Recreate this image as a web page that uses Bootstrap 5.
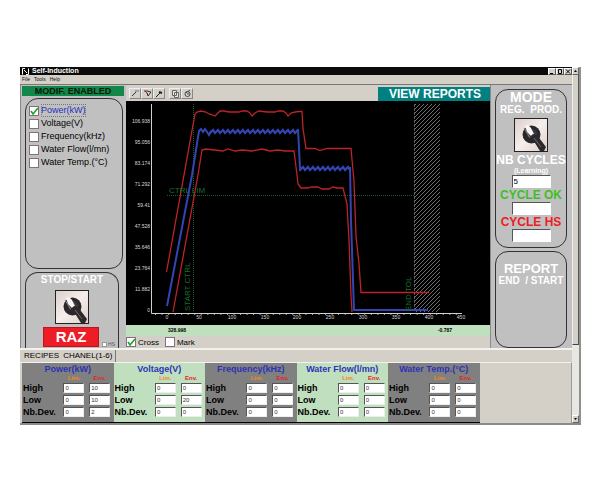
<!DOCTYPE html>
<html lang="en">
<head>
<meta charset="utf-8">
<meta name="viewport" content="width=device-width, initial-scale=1">
<title>Self-Induction</title>
<link href="https://cdn.jsdelivr.net/npm/bootstrap@5.3.0/dist/css/bootstrap.min.css" rel="stylesheet">
<style>
body{background:#fff;color:#000;font-family:"Liberation Sans",Arial,sans-serif;font-size:9px;line-height:13px;padding:67px 19px 0 20px}
button,input{font-family:inherit}
.app{background:#d4d0c8;border-bottom:2px solid #8a8a8a}
.titlebar{background:#0b0b0b;color:#fff;font-size:7px;font-weight:700;line-height:8px;padding-left:2px}
.titlebar svg{width:7px;height:7px;margin-right:3px}
.titlebar .winbtn{width:8px;height:7px;background:#d4d0c8;border:1px solid #fff;border-right-color:#555;border-bottom-color:#555;padding:0;display:flex}
.titlebar .winbtn svg{width:6px;height:5px;margin:0}
.menus{font-size:5px;line-height:9px;padding-left:2px;gap:4px;border-bottom:1px solid #777}
.menus a{color:#111;text-decoration:none}
.side{background:#c0c0c0}
.side-left{width:106px;border-left:1px solid #888;padding:1px 2px 0 1px}
.side-right{width:82px;padding:4px 5px 0 4px;border-left:1px solid #8a8a8a}
.modif{background:#128749;color:#021a0b;font-size:9px;font-weight:700;line-height:10px;text-align:center;margin-bottom:2px}
.box{border:1px solid #333;border-radius:13px}
.box-list{min-height:171px;margin:0 1px 3px 3px;padding:5px 3px}
.box-stop{margin:0 5px 0 3px;border-bottom:0;border-radius:13px 13px 0 0;flex:1;color:#fff;padding-top:1px}
.list-line,.check-line{display:flex;align-items:center;gap:2px}
.tick{appearance:none;width:10px;height:10px;background:#fff;border:1px solid #84707c;margin:0;flex:none}
.tick:checked{background:#fff url("data:image/svg+xml,%3Csvg xmlns='http://www.w3.org/2000/svg' viewBox='0 0 8 8'%3E%3Cpath d='M1 4l2 3 5-6' fill='none' stroke='%2318a52c' stroke-width='1.6'/%3E%3C/svg%3E") center/8px 8px}
.tick-s{width:5px;height:5px;border-color:#999}
.chosen{color:#2730bd;outline:1px dotted #777;outline-offset:-1px}
.knob{width:34px;height:34px;border:1px solid #222;padding:0;display:block;background:#efe4e0}
.knob svg{display:block;width:100%;height:100%}
.head-s{font-size:10px;line-height:12px;font-weight:700}
.raz{background:#ee1c25;color:#fff;font-size:15px;line-height:18px;font-weight:700;border:1px solid #b9151c;width:56px;padding:0;height:20px}
.razrow{padding-top:3px}
.hs{font-size:5px;line-height:6px;color:#555;gap:1px;padding:0 3px}
.tools{height:16px;padding-left:3px}
.tool{width:12px;height:11px;padding:0;border:1px solid #eee;border-right-color:#888;border-bottom-color:#888;background:#d4d0c8;display:flex;justify-content:center}
.tool svg{width:9px;height:9px}
.reports{background:#008080;color:#fff;font-weight:700;font-size:12px;line-height:14px;width:112px;border:0;padding:0 0 0 2px}
.plot{display:block;width:100%;background:#000}
.plot text{font-family:"Liberation Sans",Arial,sans-serif;font-size:5px;fill:#d8d8d8}
.plot .cap{font-size:8px;fill:#17702c}
.readout{background:#c0dfbf;font-size:5px;font-weight:700;line-height:11px;padding:0 38px 0 42px}
.checks{line-height:11px;font-size:8px;height:12px;gap:6px}
.white{color:#fff;font-weight:700}
.t14{font-size:14px;line-height:15px}
.t13{font-size:13px;line-height:15px}
.t12{font-size:12px;line-height:14px}
.t10{font-size:10px;line-height:10px}
.t6{font-size:7px;line-height:8px}
.count{width:39px;height:13px;border:1px solid #fff;border-top-color:#555;border-left-color:#555;background:#fff;font-size:8px;padding:0 1px;display:block;margin:0 auto}
.ok{color:#3fbf25;font-weight:700}.ko{color:#ee1c25;font-weight:700}
.box-mode{min-height:159px;margin-bottom:3px}
.box-mode .knob{margin-top:3px;margin-bottom:1px}
.box-report{flex:1;padding-top:9px}
.scroller{width:9px;background:#e9e7e2;border-right:2px solid #909090}
.scroller button{width:7px;height:8px;border:1px solid #fff;border-right-color:#666;border-bottom-color:#666;background:#d4d0c8;padding:0;display:flex}
.thumb{flex:0 1 270px;background:#d4d0c8;border-left:1px solid #eee;border-bottom:1px solid #444;border-right:1px solid #555}
.tabsrow{border-top:2px solid #f4f2ee;font-size:8px;line-height:12px;gap:4px;padding-left:4px}
.tabsrow button{border:0;background:none;padding:0;line-height:12px}
.tabsrow .on{border-right:1px solid #777;padding-right:3px}
.chans{padding-left:2px;border-top:1px solid #f4f2ee;border-right:1px solid #999}
.chan{background:#808080;border-bottom:1px solid #000;padding:1px 1px 4px}
.chan.pale{background:#c0dfbf}
.chan table{width:100%;table-layout:fixed;font-weight:700;line-height:12px}
.chan td,.chan th{padding:0;vertical-align:middle}
.chan thead th{text-align:center;color:#2d33b8;line-height:11px}
.chan thead .sub th{font-size:6px;line-height:7px}
.chan thead .sub .lim{color:#f08a1c}.chan thead .sub .env{color:#e3231f}
.chan col:first-child{width:38px}
.chan input{display:block;width:21px;height:10px;margin:1px auto;border:1px solid #eee;border-top-color:#555;border-left-color:#555;background:#fff;font-size:6px;line-height:7px;padding:0 1px;color:#333}
</style>
<script src="https://cdn.jsdelivr.net/npm/bootstrap@5.3.0/dist/js/bootstrap.bundle.min.js"></script>
</head>
<body>
<svg width="0" height="0" class="position-absolute" aria-hidden="true">
<defs>
<linearGradient id="plate" x1="0" x2="1" y2="1"><stop stop-color="#dccfcb"/><stop offset=".5" stop-color="#f6eeeb"/><stop offset="1" stop-color="#dfcfca"/></linearGradient>
<symbol id="dial" viewBox="0 0 32 32"><rect width="32" height="32" fill="url(#plate)"/><circle cx="16.500" cy="15.500" r="9" fill="#292729"/><circle cx="17" cy="15" r="5" fill="#3c393d"/><path d="M10 7l3-1 3 3 3 6-3 2-4-4z" fill="#f7f5f5"/><path d="M9 9l6 10" stroke="#888" stroke-width="1"/><path d="M14 19l4-4 4 1 9 12-2 4-4 0-5-8z" fill="#2c282b"/><path d="M19 19l7 9" stroke="#6c686c" stroke-width="1"/></symbol>
</defs></svg>
<main class="app d-flex">
<div class="flex-grow-1 overflow-hidden">
<header class="titlebar d-flex align-items-center">
<svg viewBox="0 0 7 7" fill="none" stroke="#fff"><path d="M3 .5H.5v6M4 6.500h2.500v-6M2 2l3 3"/></svg><span class="me-auto">Self-Induction</span>
<button class="winbtn" aria-label="Minimize"><svg viewBox="0 0 6 5"><path d="M1 4.500h3" stroke="#000"/></svg></button>
<button class="winbtn" aria-label="Restore"><svg viewBox="0 0 6 5"><path d="M1.500.5h3v4h-3z" fill="none" stroke="#000"/></svg></button>
<button class="winbtn" aria-label="Close"><svg viewBox="0 0 6 5"><path d="M1 .5l4 4M5 .5l-4 4" stroke="#000"/></svg></button>
</header>
<nav class="menus d-flex"><a href="#">File</a><a href="#">Tools</a><a href="#">Help</a></nav>
<div class="d-flex">
<section class="side side-left d-flex flex-column">
<div class="modif">MODIF. ENABLED</div>
<div class="box box-list">
<label class="list-line"><input class="tick" type="checkbox" checked><span class="chosen">Power(kW)</span></label>
<label class="list-line"><input class="tick" type="checkbox">Voltage(V)</label>
<label class="list-line"><input class="tick" type="checkbox">Frequency(kHz)</label>
<label class="list-line"><input class="tick" type="checkbox">Water Flow(l/mn)</label>
<label class="list-line"><input class="tick" type="checkbox">Water Temp.(°C)</label>
</div>
<div class="box box-stop text-center">
<div class="head-s">STOP/START</div>
<button class="knob mx-auto mt-1" aria-label="Stop or start"><svg><use href="#dial"/></svg></button>
<div class="razrow d-flex justify-content-end align-items-end"><button class="raz">RAZ</button><label class="hs d-flex align-items-center"><input class="tick tick-s" type="checkbox">HS</label></div>
</div>
</section>
<section class="flex-grow-1">
<div class="tools d-flex align-items-center">
<button class="tool" aria-label="Zoom out"><svg viewBox="0 0 9 9" fill="none" stroke="#333"><path d="M1 7l4-4"/><path d="M4 2h4" stroke="#3a8aa0"/></svg></button>
<button class="tool" aria-label="Edit"><svg viewBox="0 0 9 9" fill="none" stroke="#333"><path d="M1 2h3l4 1-3 4-1-3"/><path d="M2 2l3 3" stroke="#a22"/></svg></button>
<button class="tool me-1" aria-label="Zoom in"><svg viewBox="0 0 9 9" fill="none" stroke="#222"><path d="M1 8l4-4"/><path d="M4 3l3 1" stroke-width="2"/></svg></button>
<button class="tool" aria-label="Copy"><svg viewBox="0 0 9 9" fill="#e8e8e8" stroke="#666"><path d="M1.500 1.500h4v5h-4zM3.500 3.500h4v5h-4z"/></svg></button>
<button class="tool" aria-label="Print"><svg viewBox="0 0 9 9" fill="#ddd" stroke="#444"><circle cx="4.500" cy="5" r="2.500"/><path d="M3 4l4-3M4 5h2"/></svg></button>
<button class="reports ms-auto align-self-end">VIEW REPORTS</button>
</div>
<svg class="plot" viewBox="126 101 364 224" role="img" aria-label="Power curve">
<defs><pattern id="hatch" width="4" height="4" patternUnits="userSpaceOnUse"><path d="M-1 5L5-1M-1 1L1-1M3 5L5 3" stroke="#8a8a8a" stroke-width=".8"/></pattern>
<pattern id="ripple" x="210" y="128" width="5" height="37" patternUnits="userSpaceOnUse"><path d="M-1 4L0 5 3 2 5 5 8 2" fill="none" stroke="#3345b5" stroke-width="2.200"/></pattern></defs>
<rect x="414" y="104" width="26" height="208" fill="url(#hatch)"/>
<g fill="none">
<path d="M167 195.500H414M193.500 104V312" stroke="#1b5a2a" stroke-dasharray="1 1"/>
<path d="M414.500 104V312" stroke="#555" stroke-dasharray="1 1"/>
<path d="M151.500 104V313.500H462" stroke="#d0d0d0"/>
<path d="M155 314.500H462" stroke="#aaa" stroke-dasharray="1 5.540"/>
<path d="M166.500 272L195 114l2-2 4-1 5 1 3 2 4 1 2 1 2-2 3-3 4 0 5 1 10 0 3-1 5 0 3 2 2 3 3-3 4-2 8 1h8l3-1 5 0 3 2 2 3 3-3 4-1 4-.5 3 0 1 17 3 20h9l5 2 7-2h24l3 33 2 55 3 27 2 29h68" stroke="#bd2327" stroke-width="1.300"/>
<path d="M173 312L198 175 202 150 206 149 223 151 228 149 235 151 242 150 252 151 262 149 270 151 278 150 285 151H294L297 175 298 184 301 188H308L311 187H318L322 189H329L333 187 337 188H343L347 204 349 240 351 295 352 312" stroke="#bd2327" stroke-width="1.300"/>
<path d="M167 306L192 175 199 131 201 129 203 132 205 129 207 132 209 135 211 131" stroke="#3345b5" stroke-width="2"/>
<path d="M298 129L300 168M350 167L351 220 354 310H428" stroke="#3345b5" stroke-width="2"/>
</g>
<rect x="210" y="128" width="88" height="8" fill="url(#ripple)"/>
<rect x="299" y="165" width="51" height="8" fill="url(#ripple)"/>
<g text-anchor="end"><text x="150" y="123">106.938</text><text x="150" y="144">95.056</text><text x="150" y="165">83.174</text><text x="150" y="186">71.292</text><text x="150" y="207">59.41</text><text x="150" y="228">47.528</text><text x="150" y="249">35.646</text><text x="150" y="270">23.764</text><text x="150" y="291">11.882</text><text x="150" y="312">0</text></g>
<g text-anchor="middle"><text x="167" y="319">0</text><text x="199" y="319">50</text><text x="232" y="319">100</text><text x="265" y="319">150</text><text x="297" y="319">200</text><text x="330" y="319">250</text><text x="363" y="319">300</text><text x="396" y="319">350</text><text x="429" y="319">400</text><text x="461" y="319">450</text></g>
<text class="cap" x="169" y="193">CTRL LIM</text>
<text class="cap" transform="translate(190 311) rotate(-90)">START CTRL</text>
<text class="cap" transform="translate(411 311) rotate(-90)">END TOL</text>
</svg>
<div class="readout d-flex justify-content-between"><span>328.998</span><span>-0.787</span></div>
<div class="checks d-flex"><label class="check-line"><input class="tick" type="checkbox" checked>Cross</label><label class="check-line"><input class="tick" type="checkbox">Mark</label></div>
</section>
<section class="side side-right d-flex flex-column text-center">
<div class="box box-mode white">
<div class="t14">MODE</div>
<div class="t10 d-flex justify-content-between px-1"><span>REG.</span><span>PROD.</span></div>
<button class="knob mx-auto" aria-label="Mode"><svg><use href="#dial"/></svg></button>
<label for="nb" class="d-block t12 text-nowrap">NB CYCLES</label><div class="t6">(Learning)</div>
<input class="count" id="nb" value="5">
<label for="cok" class="d-block t12 ok">CYCLE OK</label><input class="count" id="cok">
<label for="chs" class="d-block t12 ko">CYCLE HS</label><input class="count" id="chs">
</div>
<div class="box box-report white"><div class="t13">REPORT</div><div class="t10 text-nowrap">END &nbsp;/ START</div></div>
</section>
</div>
<div class="tabsrow d-flex"><button>RECIPES</button><button class="on">CHANEL(1-6)</button></div>
<div class="chans d-flex">
<div class="chan col-2"><table><colgroup><col><col><col></colgroup><thead><tr><th colspan="3">Power(kW)</th></tr><tr class="sub"><th></th><th class="lim">Lim.</th><th class="env">Env.</th></tr></thead><tbody><tr><th>High</th><td><input aria-label="Power high limit" value="0"></td><td><input aria-label="Power high envelope" value="10"></td></tr><tr><th>Low</th><td><input aria-label="Power low limit" value="0"></td><td><input aria-label="Power low envelope" value="10"></td></tr><tr><th>Nb.Dev.</th><td><input aria-label="Power deviation limit" value="0"></td><td><input aria-label="Power deviation envelope" value="2"></td></tr></tbody></table></div>
<div class="chan pale col-2"><table><colgroup><col><col><col></colgroup><thead><tr><th colspan="3">Voltage(V)</th></tr><tr class="sub"><th></th><th class="lim">Lim.</th><th class="env">Env.</th></tr></thead><tbody><tr><th>High</th><td><input aria-label="Voltage high limit" value="0"></td><td><input aria-label="Voltage high envelope" value="0"></td></tr><tr><th>Low</th><td><input aria-label="Voltage low limit" value="0"></td><td><input aria-label="Voltage low envelope" value="20"></td></tr><tr><th>Nb.Dev.</th><td><input aria-label="Voltage deviation limit" value="0"></td><td><input aria-label="Voltage deviation envelope" value="0"></td></tr></tbody></table></div>
<div class="chan col-2"><table><colgroup><col><col><col></colgroup><thead><tr><th colspan="3">Frequency(kHz)</th></tr><tr class="sub"><th></th><th class="lim">Lim.</th><th class="env">Env.</th></tr></thead><tbody><tr><th>High</th><td><input aria-label="Frequency high limit" value="0"></td><td><input aria-label="Frequency high envelope" value="0"></td></tr><tr><th>Low</th><td><input aria-label="Frequency low limit" value="0"></td><td><input aria-label="Frequency low envelope" value="0"></td></tr><tr><th>Nb.Dev.</th><td><input aria-label="Frequency deviation limit" value="0"></td><td><input aria-label="Frequency deviation envelope" value="0"></td></tr></tbody></table></div>
<div class="chan pale col-2"><table><colgroup><col><col><col></colgroup><thead><tr><th colspan="3">Water Flow(l/mn)</th></tr><tr class="sub"><th></th><th class="lim">Lim.</th><th class="env">Env.</th></tr></thead><tbody><tr><th>High</th><td><input aria-label="Flow high limit" value="0"></td><td><input aria-label="Flow high envelope" value="0"></td></tr><tr><th>Low</th><td><input aria-label="Flow low limit" value="0"></td><td><input aria-label="Flow low envelope" value="0"></td></tr><tr><th>Nb.Dev.</th><td><input aria-label="Flow deviation limit" value="0"></td><td><input aria-label="Flow deviation envelope" value="0"></td></tr></tbody></table></div>
<div class="chan col-2"><table><colgroup><col><col><col></colgroup><thead><tr><th colspan="3">Water Temp.(°C)</th></tr><tr class="sub"><th></th><th class="lim">Lim.</th><th class="env">Env.</th></tr></thead><tbody><tr><th>High</th><td><input aria-label="Temperature high limit" value="0"></td><td><input aria-label="Temperature high envelope" value="0"></td></tr><tr><th>Low</th><td><input aria-label="Temperature low limit" value="0"></td><td><input aria-label="Temperature low envelope" value="0"></td></tr><tr><th>Nb.Dev.</th><td><input aria-label="Temperature deviation limit" value="0"></td><td><input aria-label="Temperature deviation envelope" value="0"></td></tr></tbody></table></div>
</div>
</div>
<div class="scroller d-flex flex-column">
<button aria-label="Scroll up"><svg viewBox="0 0 5 6"><path d="M1 4h3L2.500 2z"/></svg></button>
<div class="thumb"></div>
<button class="mt-auto" aria-label="Scroll down"><svg viewBox="0 0 5 6"><path d="M1 2h3L2.500 4z"/></svg></button>
</div>
</main>
</body>
</html>
